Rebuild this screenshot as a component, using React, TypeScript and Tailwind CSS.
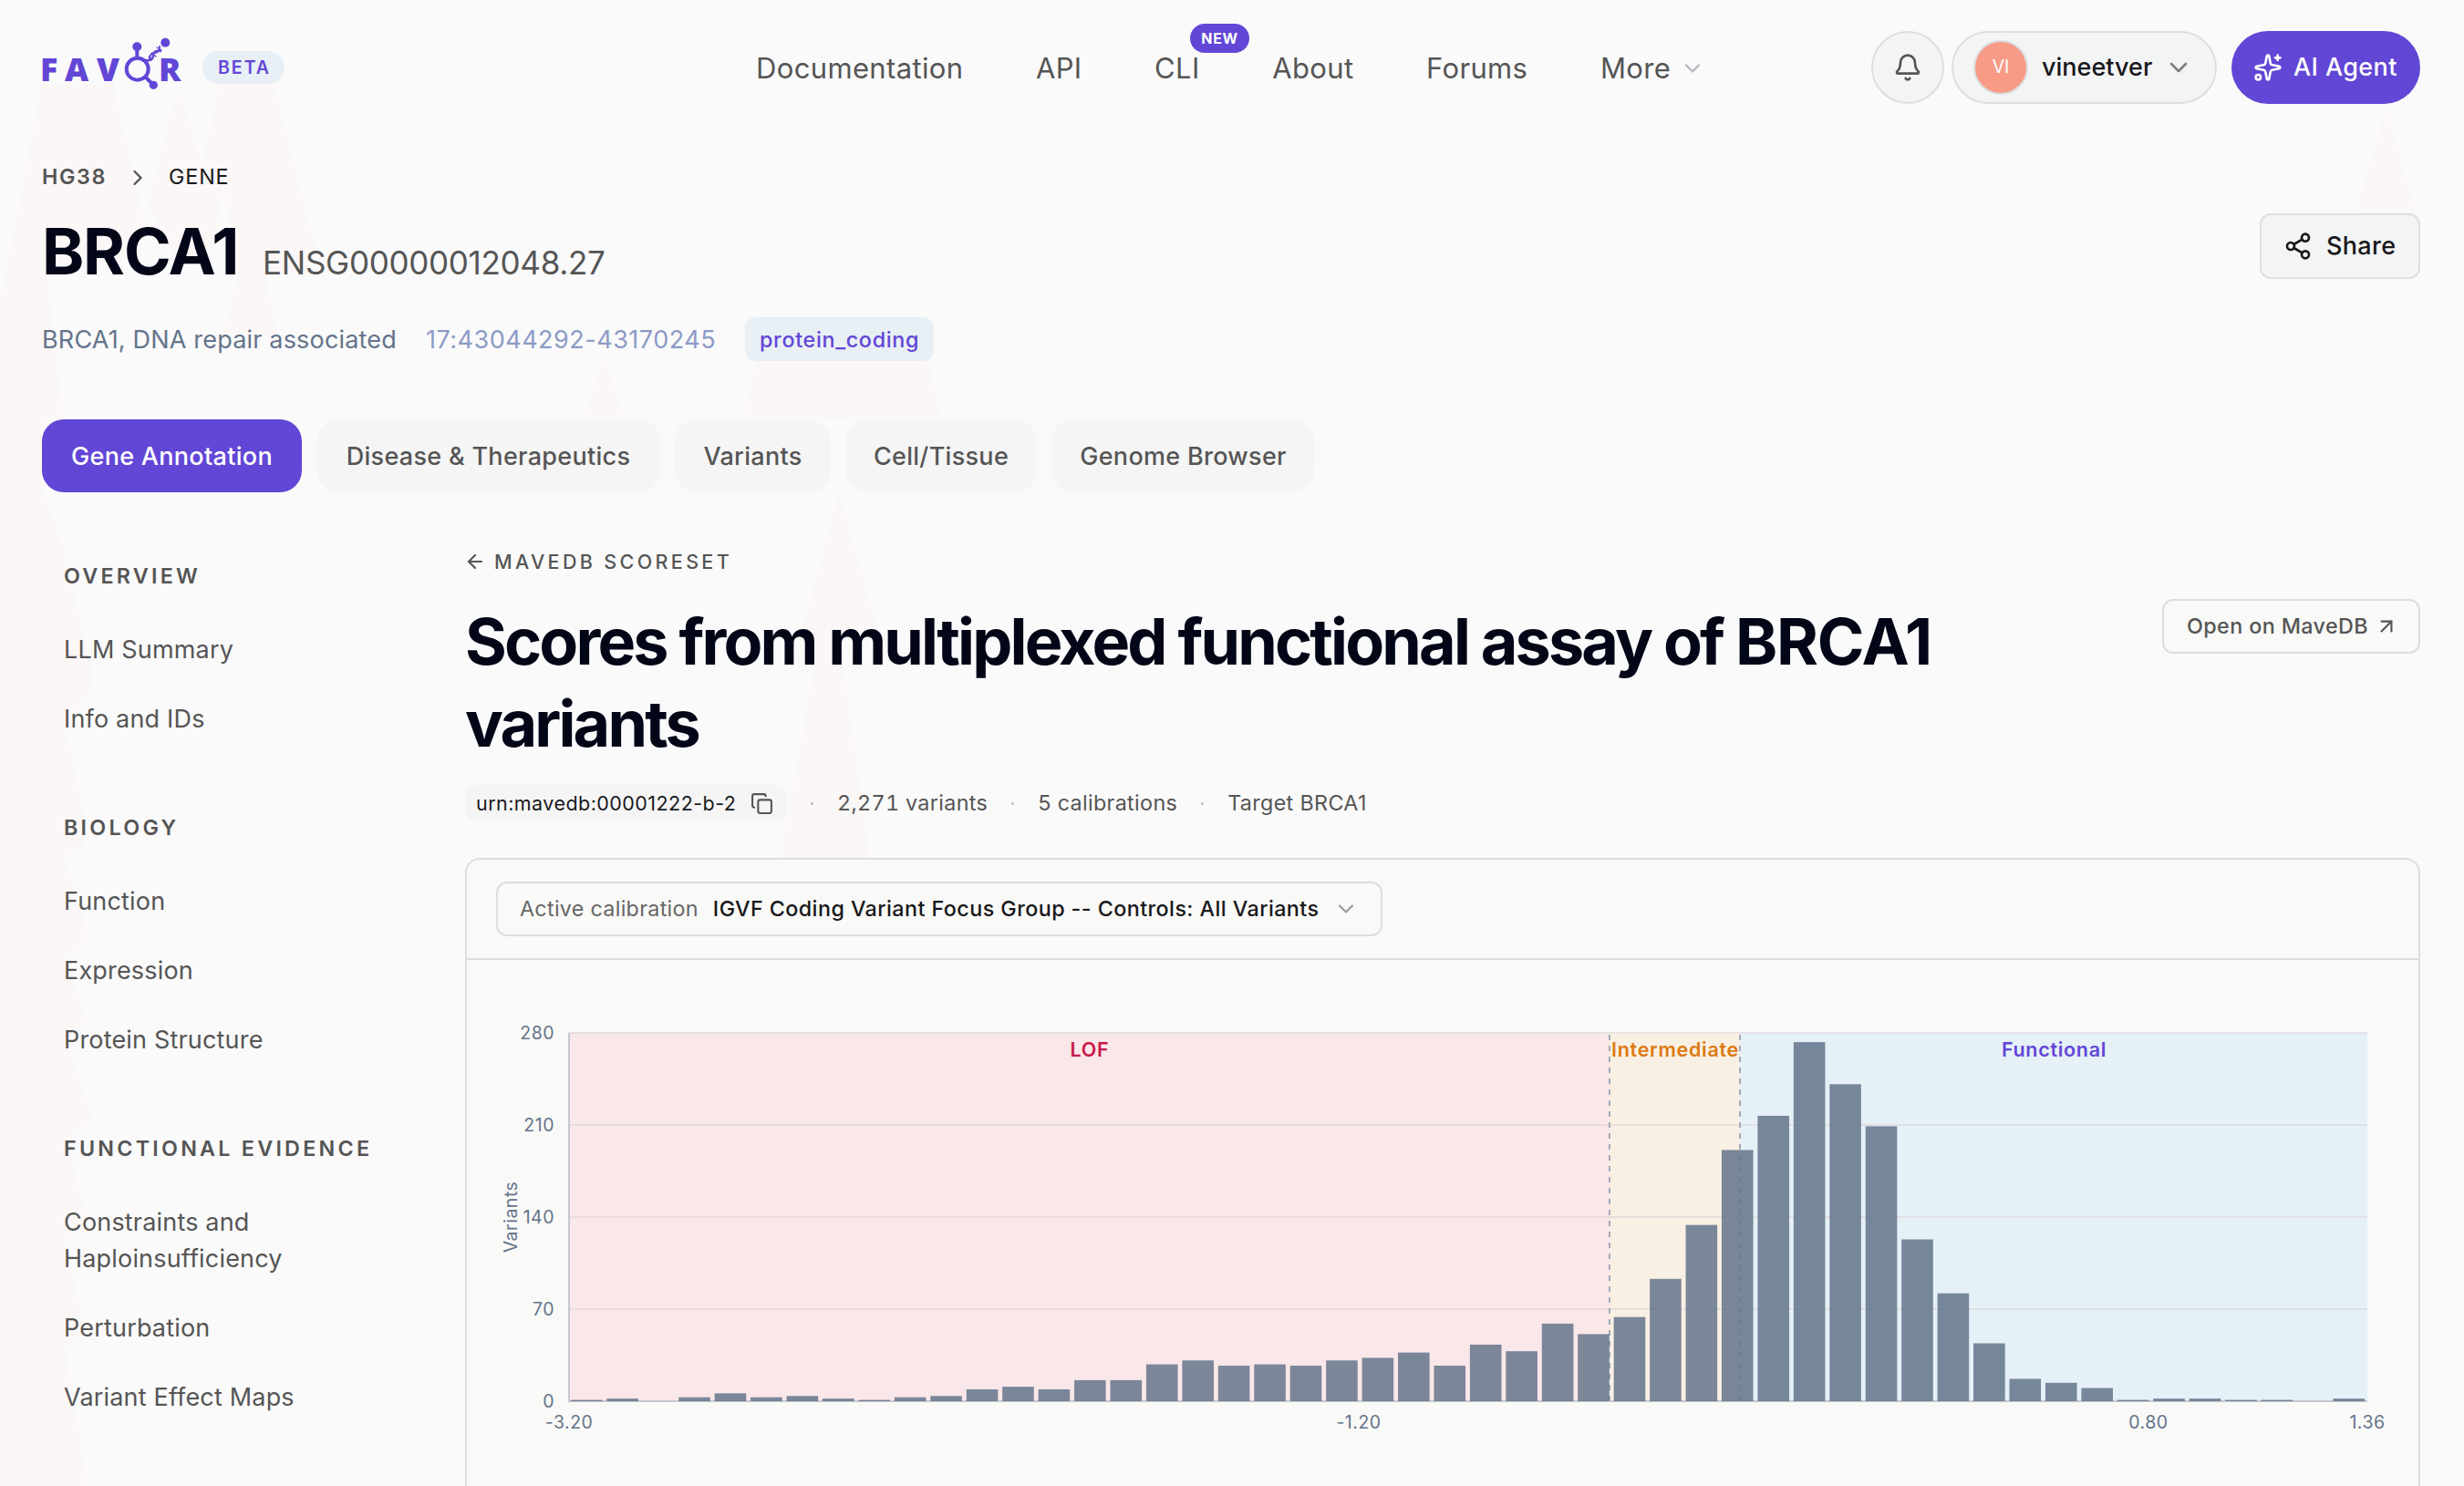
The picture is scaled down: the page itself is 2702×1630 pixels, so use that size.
import { ArrowLeft, ArrowUpRight, Bell, ChevronDown, ChevronRight, Copy, Share2, Sparkles } from 'lucide-react';

const navLinks = ['Documentation', 'API', 'CLI', 'About', 'Forums'];

const tabs = [
    { label: 'Gene Annotation', width: 'w-[285px]' },
    { label: 'Disease & Therapeutics', width: 'w-[377px]' },
    { label: 'Variants', width: 'w-[171px]' },
    { label: 'Cell/Tissue', width: 'w-[210px]' },
    { label: 'Genome Browser', width: 'w-[289px]' }
];

const sidebar = [
    { title: 'Overview', items: ['LLM Summary', 'Info and IDs'] },
    { title: 'Biology', items: ['Function', 'Expression', 'Protein Structure'] },
    {
        title: 'Functional Evidence',
        items: ['Constraints and Haploinsufficiency', 'Perturbation', 'Variant Effect Maps']
    }
];

const stats = ['2,271 variants', '5 calibrations', 'Target BRCA1'];

const counts = [
    1, 2, 0, 3, 6, 3, 4, 2, 1, 3, 4, 9, 11, 9, 16, 16, 28, 31, 27, 28, 27, 31, 33, 37, 27,
    43, 38, 59, 51, 64, 93, 134, 191, 217, 273, 241, 209, 123, 82, 44, 17, 14, 10, 1, 2, 2, 1, 1, 0, 2
];

const bands = [
    { label: 'LOF', from: 0, to: 1141, fill: '#fae7e9', color: '#c9184a' },
    { label: 'Intermediate', from: 1141, to: 1284, fill: '#f8f0e3', color: '#dd7a12' },
    { label: 'Functional', from: 1284, to: 1972, fill: '#e5f0f7', color: '#6246d6' }
];

const xTicks = [
    { label: '-3.20', x: 0 },
    { label: '-1.20', x: 866 },
    { label: '0.80', x: 1732 },
    { label: '1.36', x: 1972 }
];

const yTicks = [0, 70, 140, 210, 280];

const PLOT_W = 1972;
const PLOT_H = 404;
const Y_MAX = 280;

const yPos = (value: number) => PLOT_H - (value / Y_MAX) * PLOT_H;

const Logo = () => (
    <svg width="160" height="80" viewBox="0 0 160 80" className="shrink-0 overflow-visible" fill="#6246d6">
        <g fontFamily="'Open Sans', sans-serif" fontWeight="800" fontSize="36">
            <text x="-2" y="55">F</text>
            <text x="25" y="55">A</text>
            <text x="60" y="55">V</text>
            <text x="128" y="55">R</text>
        </g>
        <g stroke="#6246d6" strokeWidth="4" fill="none">
            <circle cx="104.7" cy="41.7" r="12" />
            <path d="M104.3 18v12M113.5 50.5l8 8" />
        </g>
        <circle cx="104.3" cy="17.3" r="5" />
        <circle cx="122.3" cy="59.3" r="4.6" />
        <circle cx="135.3" cy="12.7" r="5" />
        {/* helix between the ring and the upper node */}
        <g stroke="#6246d6" fill="none" strokeLinecap="round">
            <path d="M114 32c5 1 8-1 8-5s3-6 8-5" strokeWidth="2.4" />
            <path d="M118 32c0-5 1-8 5-8s6-3 6-7" strokeWidth="2" />
            <path d="M117 28l4 3M121 25l4 3M126 18l5 3" strokeWidth="1.2" />
        </g>
    </svg>
);

const Backdrop = () => (
    <svg className="absolute inset-0 -z-10" width="2702" height="1630" viewBox="0 0 2702 1630" fill="#fbf7f6">
        <path d="M46 92h78l34 148 37-144 27 84 18-88h60l46 180-6 28h-50l16 70h-62l18-70-17-95-14 85h-36l-30-60-35 60H50L70 460H0V330z" />
        <path d="M0 460h48v80l22 60 30 135 0 20-28 45 20 90 0 40-20 10 26 90-26 20 24 70-24 20 30 90-30 20 28 100-28 10 20 100-20 20 24 150H0z" />
        <path d="M662 385l24 75h-46zM828 396h190l14 64H815z" />
        <path d="M920 541l42 145-42 10 34 245H856l40-230-16-25z" />
        <path d="M2617 116l32 118h-66z" />
    </svg>
);

const Header = () => (
    <header className="flex items-center h-[148px]">
        <Logo />
        <span className="ml-4 flex h-9 w-[90px] items-center justify-center rounded-full bg-[#e8eff5] pl-[2px] pt-[2px] text-[19.5px] font-semibold tracking-[2px] text-[#6246d6]">
            BETA
        </span>

        <nav className="ml-[517px] flex items-center gap-[79.6px] pt-[2px] text-[31px] tracking-[0.35px] text-[#555555]">
            {navLinks.map((link) => (
                <a key={link} className="relative">
                    {link}
                    {link === 'CLI' && (
                        <span className="absolute -top-[26px] left-[39px] flex h-8 w-[65px] items-center justify-center rounded-full bg-[#6246d6] text-[16px] font-bold tracking-[0.7px] text-white">
                            NEW
                        </span>
                    )}
                </a>
            ))}
            <a className="flex items-center gap-[10px]">
                More
                <ChevronDown size={28} className="text-[#b4b8c0]" />
            </a>
        </nav>

        <div className="ml-auto flex items-center">
            <button className="flex h-20 w-20 items-center justify-center rounded-full border-2 border-[#dcdee1] bg-[#f3f4f4] text-[#555555]">
                <Bell size={32} />
            </button>
            <button className="ml-2 flex h-20 w-[291px] items-center rounded-full border-2 border-[#dcdee1] bg-[#f3f4f4] pl-[22px] text-[27px] font-medium text-[#18181b]">
                <span className="flex h-[60px] w-[60px] items-center justify-center rounded-full border-2 border-[#dcdee1] bg-[#f79b87] text-[19.5px] font-normal text-white">
                    VI
                </span>
                <span className="ml-[15px] pt-[1px]">vineetver</span>
                <ChevronDown size={32} className="ml-[13px] text-[#808080]" />
            </button>
            <button className="ml-4 flex h-20 w-[207px] items-center gap-3 rounded-full bg-[#6246d6] pl-6 text-[27px] font-medium tracking-[0.4px] text-white">
                <Sparkles size={32} />
                <span className="pt-[1px]">AI Agent</span>
            </button>
        </div>
    </header>
);

const GeneSummary = () => (
    <section>
        <div className="mt-[30px] flex h-8 items-center pt-[1px] text-[23.3px] text-[#18181b]">
            <span className="font-semibold tracking-[1.6px] text-[#555555]">HG38</span>
            <ChevronRight size={28} className="ml-[20px] text-[#555555]" />
            <span className="ml-[20px] tracking-[0.9px]">GENE</span>
        </div>

        <div className="mt-6 flex items-start justify-between">
            <div>
                <div className="flex h-[84px] items-baseline leading-[84px]">
                    <h1 className="text-[70px] font-bold tracking-[-1.2px] text-[#020617]">BRCA1</h1>
                    <span className="ml-[27px] text-[35px] tracking-[-0.3px] text-[#555555]">ENSG00000012048.27</span>
                </div>
                <div className="mt-[30px] flex h-12 items-center text-[27px]">
                    <span className="pt-[2px] tracking-[0.18px] text-[#64748b]">BRCA1, DNA repair associated</span>
                    <span className="ml-[32px] pt-[2px] tracking-[0.5px] text-[#8d9bc6]">17:43044292-43170245</span>
                    <span className="ml-[32px] flex h-12 w-[207px] items-center justify-center rounded-xl bg-[#e8eff5] pt-[2px] text-[23.3px] font-medium tracking-[0.7px] text-[#6246d6]">
                        protein_coding
                    </span>
                </div>
            </div>
            <button className="flex h-[72px] w-[176px] items-center gap-[15px] rounded-xl border-2 border-[#dcdee1] bg-[#f3f4f4] pl-[24px] text-[27px] font-medium tracking-[0.3px] text-[#18181b]">
                <Share2 size={32} />
                <span className="pt-[1px]">Share</span>
            </button>
        </div>

        <div className="mt-16 flex gap-4">
            {tabs.map((tab, i) => (
                <button
                    key={tab.label}
                    className={`h-20 whitespace-nowrap rounded-3xl pt-[2px] text-[27px] font-medium tracking-[0.3px] ${tab.width} ${
                        i === 0 ? 'bg-[#6246d6] text-white' : 'bg-[#f5f5f5] text-[#555555]'
                    }`}
                >
                    {tab.label}
                </button>
            ))}
        </div>
    </section>
);

const Sidebar = () => (
    <aside className="flex w-[464px] shrink-0 flex-col gap-[62px] pl-6 pt-[72px] text-[#555555]">
        {sidebar.map((group) => (
            <div key={group.title}>
                <h3 className="mb-[22px] text-[23.3px] font-semibold uppercase leading-10 tracking-[3.25px]">{group.title}</h3>
                {group.items.map((item) => (
                    <a key={item} className="block max-w-[330px] pb-[17px] pt-[19px] text-[27px] leading-10 tracking-[0.18px]">
                        {item}
                    </a>
                ))}
            </div>
        ))}
    </aside>
);

const Histogram = () => {
    const slot = PLOT_W / counts.length;

    return (
        <svg width="2140" height="640" viewBox="0 0 2140 640" className="block" fontSize="19.5" letterSpacing="0.5">
            <g transform="translate(112 80)">
                {bands.map((band) => (
                    <rect key={band.label} x={band.from} y={0} width={band.to - band.from} height={PLOT_H} fill={band.fill} />
                ))}
                {yTicks.map((tick) => (
                    <g key={tick}>
                        <line x1={0} x2={PLOT_W} y1={yPos(tick)} y2={yPos(tick)} stroke="#dcd3d7" strokeOpacity="0.6" strokeWidth="2" />
                        <text x={-16} y={yPos(tick) + 7} textAnchor="end" fill="#64748b">{tick}</text>
                    </g>
                ))}
                {bands.slice(1).map((band) => (
                    <line
                        key={band.label}
                        x1={band.from}
                        x2={band.from}
                        y1={2}
                        y2={PLOT_H}
                        stroke="#a2abb8"
                        strokeWidth="2"
                        strokeDasharray="6 6"
                    />
                ))}
                <path d={`M0 0V${PLOT_H}H${PLOT_W}`} fill="none" stroke="#c5c8d0" strokeWidth="2" />
                {counts.map((count, i) => (
                    <rect
                        key={i}
                        x={i * slot + 1.9}
                        y={yPos(count)}
                        width={34.6}
                        height={PLOT_H - yPos(count)}
                        fill="#64748b"
                        fillOpacity="0.85"
                    />
                ))}
                {bands.map((band) => (
                    <text
                        key={band.label}
                        x={(band.from + band.to) / 2 + 0.5}
                        y={26}
                        textAnchor="middle"
                        fontSize="21.5"
                        fontWeight="600"
                        letterSpacing="0.7"
                        fill={band.color}
                    >
                        {band.label}
                    </text>
                ))}
                {xTicks.map((tick) => (
                    <text key={tick.label} x={tick.x} y={PLOT_H + 30} textAnchor="middle" fill="#64748b">{tick.label}</text>
                ))}
                <text transform={`translate(-57 ${PLOT_H / 2}) rotate(-90)`} textAnchor="middle" fill="#64748b">Variants</text>
            </g>
        </svg>
    );
};

const ScoreSet = () => (
    <main className="flex-1 pt-[60px]">
        <a className="flex h-8 items-center gap-[9px] text-[21.5px] font-medium uppercase tracking-[3.35px] text-[#555555]">
            <ArrowLeft size={24} strokeWidth={2.2} className="-ml-[1px]" />
            MaveDB Scoreset
        </a>

        <div className="mt-[25px] flex items-start justify-between">
            <h2 className="max-w-[1700px] pt-[2px] text-[70px] font-bold leading-[90px] tracking-[-2.83px] text-[#020617]">
                Scores from multiplexed functional assay of <span className="tracking-[-1.2px]">BRCA1</span> variants
            </h2>
            <a className="flex h-[60px] w-[283px] items-center gap-[7px] rounded-xl border-2 border-[#dcdde1] bg-[#f9f9f7] pl-[25px] text-[23.3px] font-medium tracking-[0.4px] text-[#555555]">
                <span className="pt-[1px]">Open on MaveDB</span>
                <ArrowUpRight size={26} />
            </a>
        </div>

        <div className="mt-[22px] flex h-10 items-center text-[23.3px] text-[#555555]">
            <span className="flex h-10 w-[353px] items-center justify-between rounded-xl bg-[#f5f5f5] pl-3 pr-[15px] text-[21.5px] tracking-[0.45px] text-[#18181b]">
                urn:mavedb:00001222-b-2
                <Copy size={25} className="text-[#555555]" />
            </span>
            {stats.map((stat) => (
                <span key={stat} className="flex items-center pt-[1px] tracking-[0.35px] first-of-type:tabular-nums">
                    <span className="ml-[26px] mr-[26px] h-[3px] w-[3px] rounded-full bg-[#b4b8c0]" />
                    <span className={stat.includes(',') ? 'tabular-nums' : ''}>{stat}</span>
                </span>
            ))}
        </div>

        <div className="mt-10 rounded-t-2xl border-2 border-[#dcdde1] bg-[#f9f9f7]">
            <div className="border-b-2 border-[#dcdde1] px-8 py-6">
                <button className="flex h-[60px] w-[972px] items-center rounded-xl border-2 border-[#dcdde1] pl-[24px] text-[23.3px]">
                    <span className="pt-[1px] tracking-[0.3px] text-[#666666]">Active calibration</span>
                    <span className="ml-[16px] pt-[1px] font-medium tracking-[0.44px] text-[#18181b]">
                        IGVF Coding Variant Focus Group -- Controls: All Variants
                    </span>
                    <ChevronDown size={28} className="ml-[16px] text-[#9a9da5]" />
                </button>
            </div>
            <Histogram />
        </div>
    </main>
);

const App = () => {
    return (
        <div className="relative isolate h-[1630px] w-[2702px] overflow-hidden bg-[#fafafa] pl-[46px] pr-12 font-['Inter',sans-serif]">
            <Backdrop />
            <Header />
            <GeneSummary />
            <div className="flex">
                <Sidebar />
                <ScoreSet />
            </div>
        </div>
    );
};

export default App;
